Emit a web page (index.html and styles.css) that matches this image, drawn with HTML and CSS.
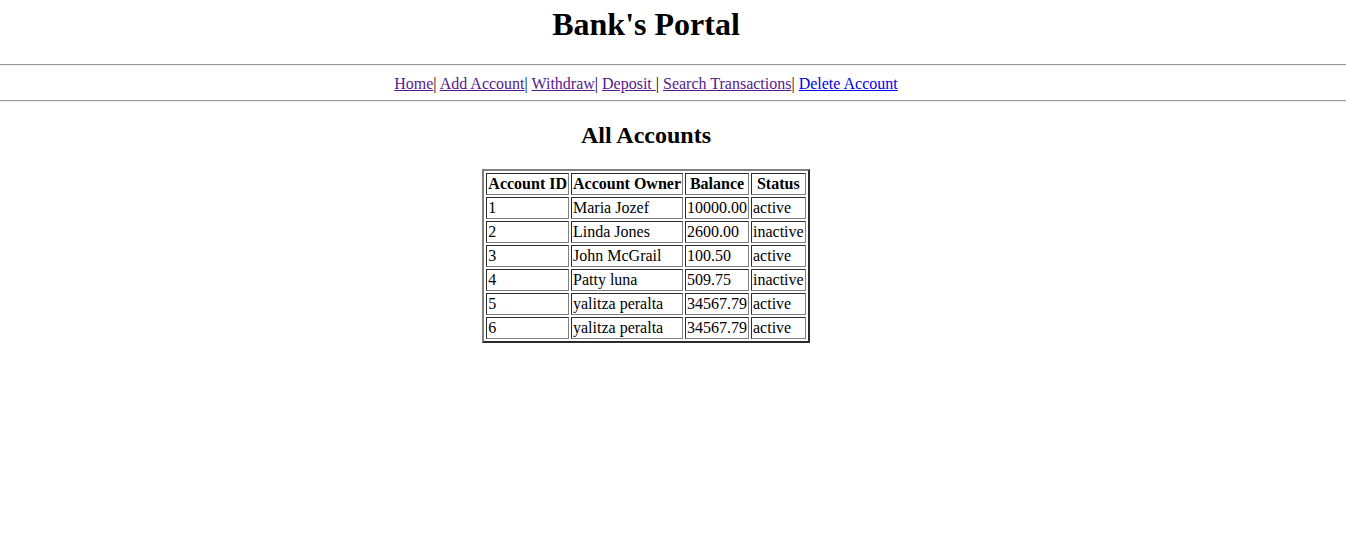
FILE: index.html
```html
<!DOCTYPE html>
<html>
<head>
<meta charset="utf-8">
<title>Bank's Portal</title>
<link rel="stylesheet" href="styles.css">
</head>
<body>
<h1 class="title col">Bank's Portal</h1>
<hr class="rule rule-top">
<div class="nav col"><a class="visited" href="#">Home</a>| <a class="visited" href="#">Add Account</a>| <a class="visited" href="#">Withdraw</a>| <a class="visited" href="#">Deposit </a>| <a class="visited" href="#">Search Transactions</a>| <a class="link" href="#">Delete Account</a></div>
<hr class="rule rule-bottom">
<h2 class="heading col">All Accounts</h2>
<div class="col">
<table class="accounts">
<tr><th>Account ID</th><th>Account Owner</th><th>Balance</th><th>Status</th></tr>
<tr><td>1</td><td>Maria Jozef</td><td>10000.00</td><td>active</td></tr>
<tr><td>2</td><td>Linda Jones</td><td>2600.00</td><td>inactive</td></tr>
<tr><td>3</td><td>John McGrail</td><td>100.50</td><td>active</td></tr>
<tr><td>4</td><td>Patty luna</td><td>509.75</td><td>inactive</td></tr>
<tr><td>5</td><td>yalitza peralta</td><td>34567.79</td><td>active</td></tr>
<tr><td>6</td><td>yalitza peralta</td><td>34567.79</td><td>active</td></tr>
</table>
</div>
</body>
</html>
```
FILE: styles.css
```css
html, body {
  margin: 0;
  padding: 0;
  background: #fff;
  color: #000;
  font-family: "Liberation Serif", "Times New Roman", serif;
  font-size: 16px;
}

.col {
  width: 1292px;
  text-align: center;
}

.title {
  font-size: 32px;
  font-weight: bold;
  margin: 6px 0 21px;
}

.rule {
  border: 0;
  border-top: 1px solid #9a9a9a;
  border-bottom: 1px solid #eeeeee;
  height: 0;
}

.rule-top {
  margin: 8px 0 9px;
}

.rule-bottom {
  margin: 7px 0 8px;
}

.nav a {
  text-decoration: underline;
}

.nav .visited {
  color: #551a8b;
}

.nav .link {
  color: #0000ee;
}

.heading {
  font-size: 24px;
  font-weight: bold;
  margin: 20px 0 20px;
}

.accounts {
  margin: 0 auto;
  border: 2px outset grey;
  border-spacing: 2px;
  text-align: left;
}

.accounts th,
.accounts td {
  border: 1px inset grey;
  padding: 1px;
}

.accounts th {
  text-align: center;
  font-weight: bold;
}
```
